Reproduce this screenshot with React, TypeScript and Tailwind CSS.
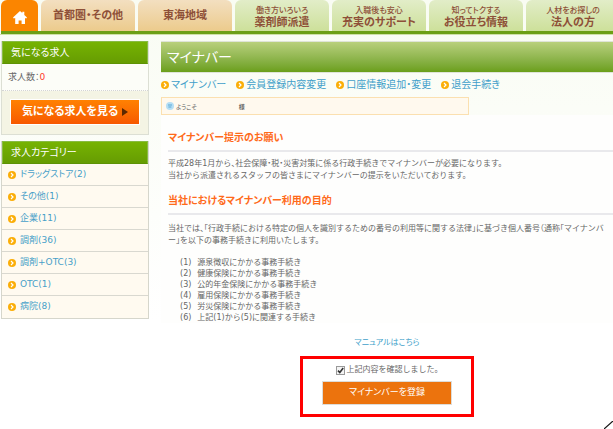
import type { ReactNode } from "react";

const tabs = [
  { title: "首都圏・その他", region: true },
  { title: "東海地域", region: true },
  { title: "薬剤師派遣", lead: "働き方いろいろ" },
  { title: "充実のサポート", lead: "入職後も安心" },
  { title: "お役立ち情報", lead: "知ってトクする" },
  { title: "法人の方", lead: "人材をお探しの" },
];

const categories = [
  "ドラッグストア(2)",
  "その他(1)",
  "企業(11)",
  "調剤(36)",
  "調剤+OTC(3)",
  "OTC(1)",
  "病院(8)",
];

const memberLinks = [
  "マイナンバー",
  "会員登録内容変更",
  "口座情報追加・変更",
  "退会手続き",
];

const procedures = [
  "源泉徴収にかかる事務手続き",
  "健康保険にかかる事務手続き",
  "公的年金保険にかかる事務手続き",
  "雇用保険にかかる事務手続き",
  "労災保険にかかる事務手続き",
  "上記(1)から(5)に関連する手続き",
];

const Bullet = () => (
  <svg viewBox="0 0 16 16" className="size-2 shrink-0" aria-hidden="true">
    <circle cx="8" cy="8" r="8" fill="#fbae08" />
    <path d="m6 4 4 4-4 4" fill="none" stroke="#fff" strokeWidth="2.4" />
  </svg>
);

const SideHeading = ({ children }: { children: ReactNode }) => (
  <h2 className="h-[23px] border border-[#88bb42] border-b-[#5d9204] bg-linear-to-b from-[#76b302] to-[#669c02] px-2 text-[10px] leading-[22px] text-white">
    {children}
  </h2>
);

const SectionHeading = ({ children }: { children: ReactNode }) => (
  <h2 className="border-b-2 border-[#e9e9ec] pb-[3px] text-[10px] leading-[18px] font-bold text-[#ff6a1a]">
    {children}
  </h2>
);

const Header = () => (
  <header className="overflow-hidden border-b border-[#cfe0a8] pl-px">
    <nav className="flex h-[34px] gap-[3px] border-b-3 border-[#6c9f16]">
      <a
        href="#"
        aria-label="ホーム"
        className="flex w-[37px] shrink-0 items-center justify-center rounded-t-md bg-[#fb8500]"
      >
        <svg viewBox="0 0 14 13" className="mt-1 h-[13px] w-[14px]" fill="#fff">
          <path d="M7 0 9.3 2.1V.8h2v3.2L14 6.6l-.8 1-1.2-.5V13H8.6V9.4H5.6V13H2.2V7.1L.8 7.6 0 6.6z" />
        </svg>
      </a>
      {tabs.map((tab) => (
        <a
          key={tab.title}
          href="#"
          className={`flex w-[94px] shrink-0 flex-col items-center justify-center rounded-t-md text-[11px] font-bold text-[#8e5038] ${
            tab.region
              ? "bg-linear-to-b from-[#f3dfc0] to-[#eccb8c]"
              : "bg-linear-to-b from-[#e2edc8] to-[#cde09a] pt-1"
          }`}
        >
          {tab.lead && (
            <span className="text-[8px] leading-[10px] font-medium">
              {tab.lead}
            </span>
          )}
          <span className="leading-[14px]">{tab.title}</span>
        </a>
      ))}
    </nav>
  </header>
);

const Sidebar = () => (
  <aside className="w-[148px] shrink-0">
    {/* saved jobs */}
    <section className="border-x border-b border-[#dcdfd4] bg-[#f4f4e4]">
      <SideHeading>気になる求人</SideHeading>
      <p className="border-b border-dotted border-[#d4d4d4] bg-[#fcfdf8] px-[6px] text-[9px] leading-[26px]">
        求人数：<span className="text-[#ff3a2a]">0</span>
      </p>
      <div className="p-2 pb-[9px]">
        <button
          type="button"
          className="flex h-[26px] w-full items-center justify-center gap-1 border border-white bg-linear-to-b from-[#ff8102] to-[#f75800] text-[11px] font-bold text-white"
        >
          気になる求人を見る
          <svg viewBox="0 0 6 8" className="h-2 w-[6px]" fill="#5d2800">
            <path d="m0 0 6 4-6 4z" />
          </svg>
        </button>
      </div>
    </section>

    {/* job categories */}
    <section className="mt-[6px] border-x border-b border-[#d6d6cc] bg-[#fffaf0]">
      <SideHeading>求人カテゴリー</SideHeading>
      <ul className="divide-y divide-[#d9d8d0] text-[9px]">
        {categories.map((name) => (
          <li key={name} className="flex h-[22px] items-center gap-1 px-[6px]">
            <Bullet />
            <a href="#" className="text-[#479fc8]">
              {name}
            </a>
          </li>
        ))}
      </ul>
    </section>
  </aside>
);

const Main = () => (
  <main className="min-w-0 flex-1">
    <h1 className="h-8 border-y border-[#dfe4d8] bg-linear-to-b from-[#b9d07c] to-[#6b9f18] px-[6px] text-[14px] leading-[30px] text-white">
      マイナバー
    </h1>

    <ul className="mt-1 flex gap-[10px] text-[10px] leading-4">
      {memberLinks.map((name) => (
        <li key={name} className="flex items-center gap-[2px]">
          <Bullet />
          <a href="#" className="text-[#3f9fca]">
            {name}
          </a>
        </li>
      ))}
    </ul>

    <div className="mt-1 flex h-[18px] w-[308px] items-center gap-[2px] border border-[#fbe0b0] bg-[#fff9ee] px-1 text-[6px]">
      <svg viewBox="0 0 8 8" className="size-2" aria-hidden="true">
        <circle cx="4" cy="4" r="4" fill="#b5def5" />
        <path d="M2 3h4M2.4 5h3" stroke="#5aa9d6" strokeWidth="1" />
      </svg>
      <span>ようこそ</span>
      <span className="ml-10 font-bold">様</span>
    </div>

    <div className="bg-[#fefefd] pl-[7px] text-[8px] leading-3">
      <section className="pt-[14px]">
        <SectionHeading>マイナンバー提示のお願い</SectionHeading>
        <p className="mt-[6px] [font-feature-settings:'halt']">
          平成28年1月から、社会保障・税・災害対策に係る行政手続きでマイナンバーが必要になります。
          <br />
          当社から派遣されるスタッフの皆さまにマイナンバーの提示をいただいております。
        </p>
      </section>

      <section className="pt-[10px]">
        <SectionHeading>当社におけるマイナンバー利用の目的</SectionHeading>
        <p className="mt-2 pr-1 [font-feature-settings:'halt'] [line-break:anywhere]">
          当社では、「行政手続における特定の個人を識別するための番号の利用等に関する法律」に基づき個人番号（通称「マイナンバー」を以下の事務手続きに利用いたします。
        </p>
        <ol className="mt-[10px] ml-3 leading-[11px] [font-feature-settings:'halt']">
          {procedures.map((name, i) => (
            <li key={name} className="flex gap-[6px]">
              <span>({i + 1})</span>
              {name}
            </li>
          ))}
        </ol>
      </section>
    </div>

    <form className="mt-3 flex flex-col items-center text-[8px]">
      <a href="#" className="leading-4 text-[#3f9fca]">
        マニュアルはこちら
      </a>
      <div className="mt-[5px] flex h-[61px] w-[174px] flex-col items-center border-3 border-[#ff0000] pt-[2px]">
        <div className="flex items-center gap-[2px]">
          <span className="grid">
            <input
              id="confirmed"
              type="checkbox"
              defaultChecked
              className="peer col-start-1 row-start-1 size-[9px] appearance-none border border-[#999] bg-[#f4f4f4]"
            />
            <svg
              viewBox="0 0 9 9"
              className="pointer-events-none invisible col-start-1 row-start-1 size-[9px] peer-checked:visible"
              aria-hidden="true"
            >
              <path
                d="m2 4.6 1.8 1.9L7.2 2"
                fill="none"
                stroke="#333"
                strokeWidth="1.6"
              />
            </svg>
          </span>
          <label
            htmlFor="confirmed"
            className="leading-[18px] [font-feature-settings:'halt']"
          >
            上記内容を確認しました。
          </label>
        </div>
        <button
          type="button"
          className="mt-[2px] h-6 w-[130px] border border-[#dddcd8] bg-[#ec730d] text-[9px] text-white"
        >
          マイナンバーを登録
        </button>
      </div>
    </form>
  </main>
);

const App = () => {
  return (
    <div className="relative min-h-screen overflow-hidden bg-linear-to-b from-[#f9fcf3] to-white to-75% font-['DejaVu_Sans','Noto_Sans_CJK_JP',sans-serif] text-[#666] [font-feature-settings:'palt']">
      <Header />
      <div className="flex gap-3 pt-[6px] pl-px">
        <Sidebar />
        <Main />
      </div>
      <svg
        viewBox="0 0 9 8"
        className="absolute right-0 bottom-0 h-2 w-[9px]"
        aria-hidden="true"
      >
        <path d="m0 8 9-8" stroke="#111" strokeWidth="1.2" />
      </svg>
    </div>
  );
};

export default App;
